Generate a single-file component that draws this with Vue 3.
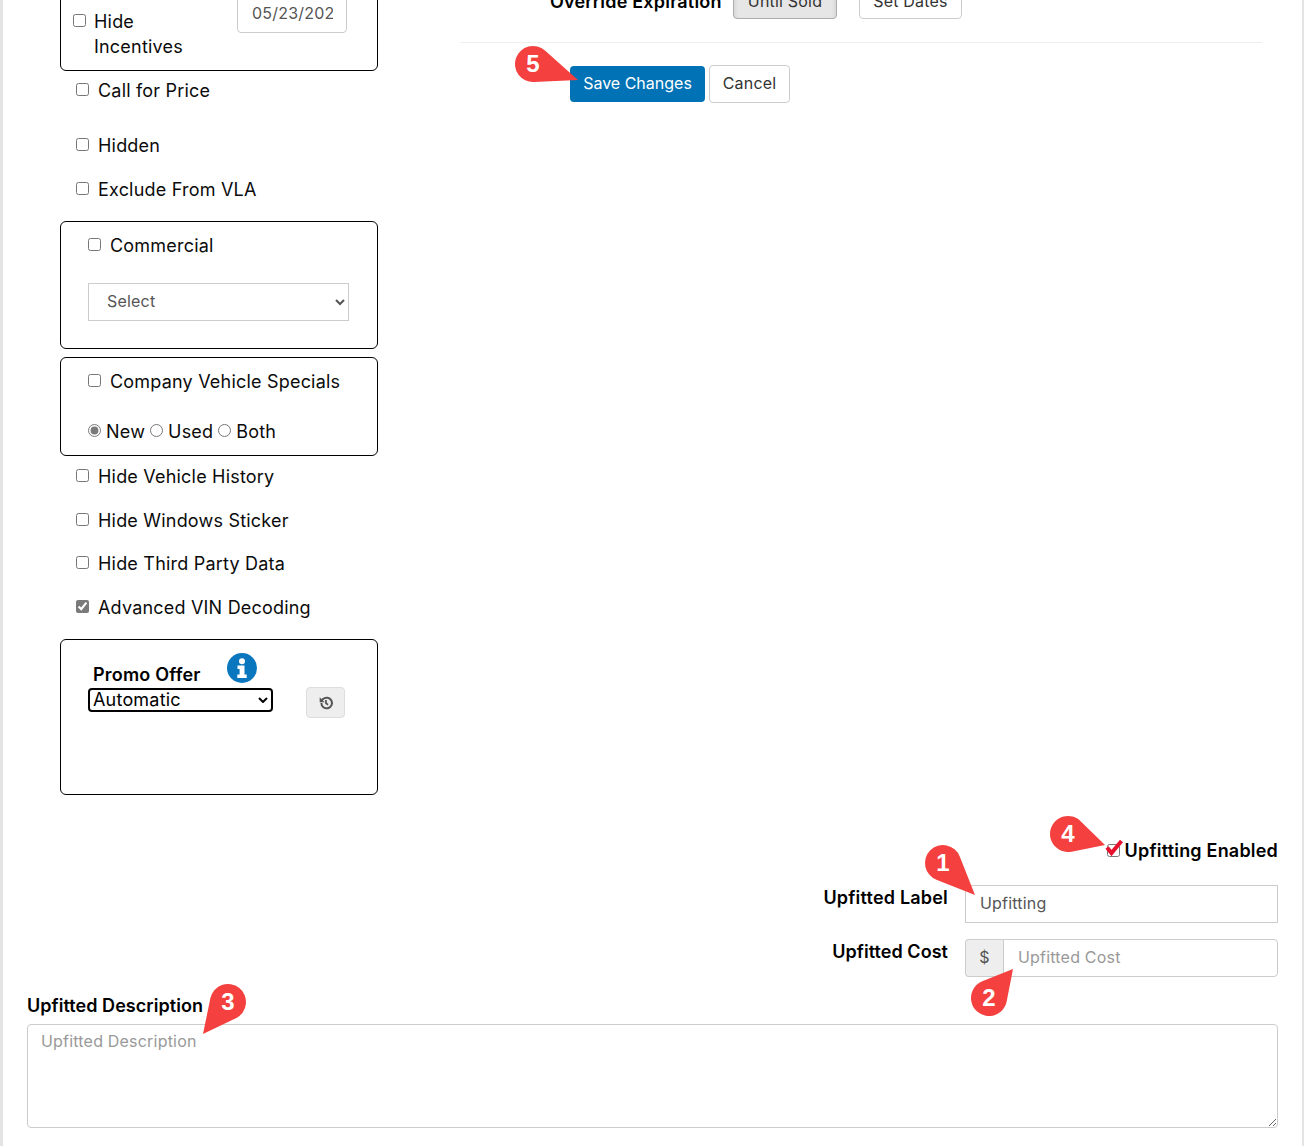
<script setup>
const pins = [
  { n: 1, cx: 943, cy: 863, tx: 975, ty: 895 },
  { n: 2, cx: 989, cy: 998, tx: 1013, ty: 969 },
  { n: 3, cx: 228, cy: 1002, tx: 203, ty: 1034 },
  { n: 4, cx: 1068, cy: 834, tx: 1105, ty: 845 },
  { n: 5, cx: 533, cy: 64, tx: 578, ty: 80 }
].map((p) => {
  const r = 18
  const dx = p.tx - p.cx
  const dy = p.ty - p.cy
  const d = Math.hypot(dx, dy)
  const a = Math.atan2(dy, dx)
  const b = Math.acos(r / d)
  const x1 = p.cx + r * Math.cos(a + b)
  const y1 = p.cy + r * Math.sin(a + b)
  const x2 = p.cx + r * Math.cos(a - b)
  const y2 = p.cy + r * Math.sin(a - b)
  return { ...p, d: `M${p.tx} ${p.ty}L${x1} ${y1}A${r} ${r} 0 1 1 ${x2} ${y2}Z` }
})
</script>

<template>
  <div class="page">
    <div class="shift">
      <div class="top">
        <div class="left">
          <div class="box box-first">
            <label class="opt wrap">
              <input type="checkbox" />
              <span>Hide Incentives</span>
            </label>
            <input class="field date" type="text" value="05/23/2023" readonly />
          </div>
          <label class="opt opt-call"><input type="checkbox" /><span>Call for Price</span></label>
          <label class="opt opt-hidden"><input type="checkbox" /><span>Hidden</span></label>
          <label class="opt"><input type="checkbox" /><span>Exclude From VLA</span></label>

          <div class="box box-commercial">
            <label class="opt"><input type="checkbox" /><span>Commercial</span></label>
            <select class="field plain-select"><option>Select</option></select>
          </div>

          <div class="box box-company">
            <label class="opt"><input type="checkbox" /><span>Company Vehicle Specials</span></label>
            <div class="radios">
              <label><input type="radio" name="cond" checked /><span>New</span></label>
              <label><input type="radio" name="cond" /><span>Used</span></label>
              <label><input type="radio" name="cond" /><span>Both</span></label>
            </div>
          </div>

          <label class="opt opt-tight"><input type="checkbox" /><span>Hide Vehicle History</span></label>
          <label class="opt"><input type="checkbox" /><span>Hide Windows Sticker</span></label>
          <label class="opt opt-third"><input type="checkbox" /><span>Hide Third Party Data</span></label>
          <label class="opt"><input type="checkbox" checked /><span>Advanced VIN Decoding</span></label>

          <div class="box box-promo">
            <div class="promo-head">
              <span class="strong">Promo Offer</span>
              <svg class="info" viewBox="0 0 30 30" width="30" height="30">
                <circle cx="15" cy="15" r="15" fill="#0a76bd" />
                <circle cx="15" cy="8.2" r="3" fill="#fff" />
                <path d="M10.5 12.5h7v9h2.2v3.6h-9.4v-3.6h2.3v-5.4h-2.1z" fill="#fff" />
              </svg>
            </div>
            <div class="promo-row">
              <select class="promo-select"><option>Automatic</option></select>
              <button class="reset" type="button" aria-label="Reset">
                <svg viewBox="0 0 24 24" width="16" height="16" fill="none" stroke="#555" stroke-width="3">
                  <path d="M5 12a8 8 0 1 0 2.6-5.9L5.5 8" />
                  <path d="M2.5 3.5v7.5h7.5z" fill="#555" stroke="none" />
                  <path d="M12 7.5v5l3.2 2" stroke-width="2.6" />
                </svg>
              </button>
            </div>
          </div>
        </div>

        <div class="right">
          <div class="expire">
            <span class="strong expire-label">Override Expiration</span>
            <button class="btn active" type="button">Until Sold</button>
            <button class="btn second" type="button">Set Dates</button>
          </div>
          <hr class="rule" />
          <div class="actions">
            <button class="save" type="button">Save Changes</button>
            <button class="btn" type="button">Cancel</button>
          </div>
        </div>
      </div>

      <div class="upfit">
        <div class="enabled">
          <span class="check-wrap">
            <input type="checkbox" />
            <svg class="red-check" viewBox="0 0 20 18" width="20" height="18">
              <path d="M3 8.5l4.5 5.5L17.5 2" fill="none" stroke="#e8112d" stroke-width="4" />
            </svg>
          </span>
          <span class="strong">Upfitting Enabled</span>
        </div>
        <div class="form-row first-row">
          <span class="strong row-label">Upfitted Label</span>
          <input class="field square row-input" type="text" value="Upfitting" readonly />
        </div>
        <div class="form-row">
          <span class="strong row-label tight-label">Upfitted Cost</span>
          <div class="group row-input">
            <span class="addon">$</span>
            <input class="field cost" type="text" placeholder="Upfitted Cost" />
          </div>
        </div>
        <div class="strong desc-label">Upfitted Description</div>
        <textarea class="field desc" placeholder="Upfitted Description"></textarea>
      </div>
    </div>

    <svg class="pins" viewBox="0 0 1304 1146" width="1304" height="1146">
      <g v-for="p in pins" :key="p.n">
        <path :d="p.d" fill="#f4403f" />
        <text :x="p.cx" :y="p.cy + 8" text-anchor="middle" class="pin-num">{{ p.n }}</text>
      </g>
    </svg>
  </div>
</template>

<style>
html, body { margin: 0; overflow: hidden; background: #fff; }
</style>

<style scoped>
.page {
  position: relative;
  box-sizing: border-box;
  width: 1304px;
  height: 1146px;
  overflow: hidden;
  background: #fff;
  border-left: 3px solid #e4e4e4;
  border-right: 2px solid #e4e4e4;
  font-family: Inter, "Noto Sans", sans-serif;
  font-size: 18px;
  line-height: 24px;
  letter-spacing: 0.2px;
  color: #0b0b0b;
}
.shift { margin-top: -20px; }
.top { display: flex; height: 815px; }
.left { width: 318px; margin-left: 57px; }
.right { width: 802px; margin-left: 82px; }

.opt { display: flex; align-items: center; margin: 20px 0 0 16px; height: 24px; }
.opt input { margin: -2px 9px 0 0; flex: none; }
.opt span { padding-top: 2px; }
.opt-call { margin-top: 7px; }
.opt-hidden { margin-top: 31px; }
.opt-tight { margin-top: 8px; }
.opt-third { margin-top: 19px; }
input[type="checkbox"], input[type="radio"] { accent-color: #7a7a7a; }

.box {
  box-sizing: border-box;
  border: 1px solid #000;
  border-radius: 6px;
  margin-top: 20px;
}
.box-first {
  margin-top: 0;
  height: 91px;
  display: flex;
  justify-content: space-between;
  align-items: flex-start;
  padding: 14px 30px 0 12px;
}
.box-first .wrap {
  margin: 14px 0 0;
  height: auto;
  width: 112px;
  align-items: flex-start;
  line-height: 25px;
}
.box-first .wrap input { margin: 5px 8px 0 0; }
.box-first .wrap span { padding-top: 0; }
.box-commercial { height: 128px; padding: 11px 28px 0 27px; }
.box-commercial .opt, .box-company .opt { margin: 0; }
.box-commercial .opt input, .box-company .opt input { margin-right: 9px; }
.box-company { height: 99px; margin-top: 8px; padding: 11px 28px 0 27px; }
.radios { display: flex; gap: 5px; margin-top: 26px; height: 24px; }
.radios label { display: flex; align-items: center; }
.radios input { margin: -2px 5px 0 0; }
.radios span { padding-top: 2px; }

.field {
  box-sizing: border-box;
  border: 1px solid #ccc;
  border-radius: 4px;
  font: inherit;
  font-size: 16px;
  letter-spacing: 0.2px;
  color: #555;
  background: #fff;
  outline: none;
}
.field::placeholder { color: #999; opacity: 1; }
.date { width: 110px; height: 38px; padding: 0 13px 2px 14px; }
.plain-select {
  display: block;
  width: 261px;
  height: 38px;
  margin-top: 26px;
  padding: 0 0 3px 14px;
  border-radius: 0;
}

.strong {
  box-sizing: border-box;
  height: 24px;
  padding-top: 1px;
  font-weight: 600;
  line-height: 24px;
  color: #000;
}
.box-promo { height: 156px; padding: 13px 32px 0 27px; }
.promo-head { display: flex; align-items: flex-start; height: 35px; padding-left: 5px; }
.promo-head .strong { margin-top: 9px; width: 108px; white-space: nowrap; }
.info { margin-left: 26px; }
.promo-row { display: flex; align-items: flex-start; }
.promo-select {
  appearance: none;
  box-sizing: border-box;
  width: 185px;
  height: 24px;
  border: 2px solid #000;
  border-radius: 4px;
  background: #fff url("data:image/svg+xml,%3Csvg xmlns='http://www.w3.org/2000/svg' width='10' height='6'%3E%3Cpath d='M1 1l4 4 4-4' fill='none' stroke='%23000' stroke-width='2'/%3E%3C/svg%3E") no-repeat right 3px center;
  font-family: inherit;
  font-size: 18px;
  line-height: 20px;
  letter-spacing: 0.2px;
  color: #000;
  outline: none;
  padding: 0 0 2px 3px;
}
.reset {
  display: flex;
  align-items: center;
  justify-content: center;
  box-sizing: border-box;
  width: 39px;
  height: 31px;
  margin: -1px 0 0 33px;
  border: 1px solid #ddd;
  border-radius: 4px;
  background: #eee;
  padding: 0;
}

.btn {
  box-sizing: border-box;
  height: 38px;
  padding: 0 13px;
  border: 1px solid #ccc;
  border-radius: 4px;
  background: #fff;
  color: #333;
  font: inherit;
  font-size: 16px;
  letter-spacing: 0.2px;
}
.expire { display: flex; align-items: center; padding: 1px 0 0 90px; }
.expire-label { width: 183px; white-space: nowrap; padding-top: 2px; }
.expire .btn { padding-top: 1px; }
.active {
  width: 104px;
  background: #e6e6e6;
  border-color: #adadad;
  box-shadow: inset 0 3px 5px rgba(0, 0, 0, 0.125);
}
.second { width: 103px; margin-left: 22px; }
.rule { margin: 23px 0 0; border: 0; border-top: 1px solid #eee; }
.actions { display: flex; align-items: center; gap: 4px; margin: 22px 0 0 110px; }
.save {
  box-sizing: border-box;
  width: 135px;
  height: 36px;
  padding: 0 0 2px;
  border: 0;
  border-radius: 4px;
  background: #0072b5;
  color: #fff;
  font: inherit;
  font-size: 16px;
}
.actions .btn { width: 81px; padding: 0 0 2px; }

.upfit { padding: 0 24px; }
.enabled { display: flex; justify-content: flex-end; align-items: center; height: 24px; padding-top: 43px; }
.check-wrap { position: relative; display: block; width: 13px; height: 13px; margin-right: 5px; }
.check-wrap input { display: block; margin: 0; }
.red-check { position: absolute; left: -3px; top: -5px; }
.form-row { display: flex; justify-content: flex-end; margin-top: 16px; }
.first-row { margin-top: 23px; }
.row-label { margin-right: 17px; }
.tight-label { letter-spacing: 0.05px; }
.row-input { width: 313px; height: 38px; }
.square { border-radius: 0; padding: 0 14px 2px; }
.group { display: flex; }
.addon {
  box-sizing: border-box;
  width: 38px;
  border: 1px solid #ccc;
  border-right: 0;
  border-radius: 4px 0 0 4px;
  background: #eee;
  color: #555;
  font-size: 16px;
  line-height: 34px;
  text-align: center;
}
.cost { flex: 1; min-width: 0; padding: 0 14px 2px; border-radius: 0 4px 4px 0; }
.desc-label { margin-top: 16px; letter-spacing: 0.05px; }
.desc {
  display: block;
  width: 100%;
  height: 104px;
  margin-top: 7px;
  padding: 4px 13px;
  resize: both;
}

.pins { position: absolute; left: -3px; top: 0; pointer-events: none; }
.pin-num {
  fill: #fff;
  font-family: "Liberation Sans", sans-serif;
  font-size: 24px;
  font-weight: 700;
}
</style>
